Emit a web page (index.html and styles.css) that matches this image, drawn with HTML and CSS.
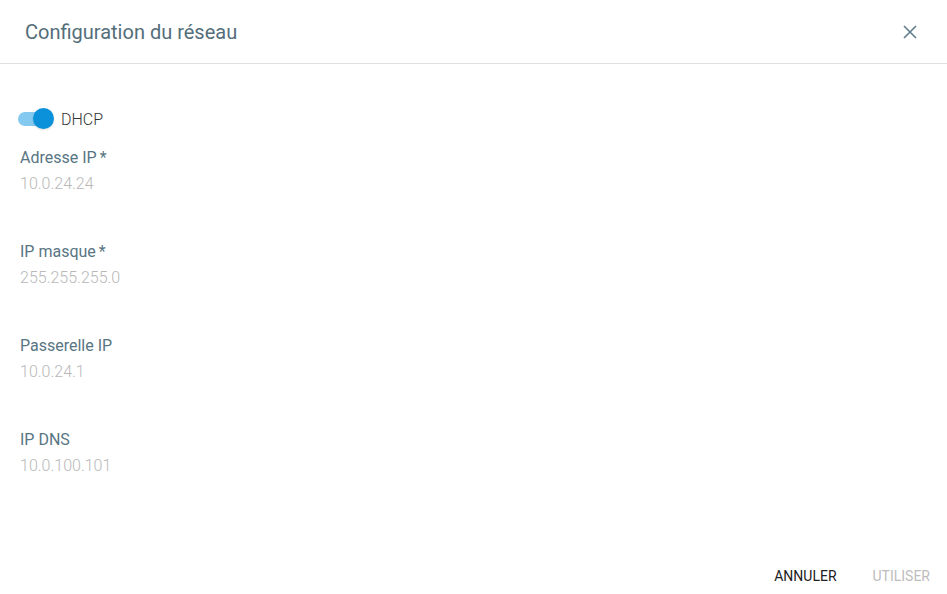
FILE: index.html
```html
<!DOCTYPE html>
<html lang="fr">
<head>
<meta charset="utf-8">
<title>Configuration du réseau</title>
<link rel="stylesheet" href="styles.css">
</head>
<body>
<div class="dialog">
  <header class="dialog-header">
    <h1 class="dialog-title">Configuration du réseau</h1>
    <button class="close-btn" aria-label="Fermer">
      <svg width="14" height="14" viewBox="0 0 14 14"><path d="M1 1L13 13M13 1L1 13" stroke="#607d8b" stroke-width="1.6" fill="none"/></svg>
    </button>
  </header>
  <main class="dialog-body">
    <label class="switch-row">
      <span class="switch"><span class="switch-track"></span><span class="switch-knob"></span></span>
      <span class="switch-label">DHCP</span>
    </label>
    <div class="field">
      <div class="field-label">Adresse IP<span class="req">*</span></div>
      <div class="field-value">10.0.24.24</div>
    </div>
    <div class="field">
      <div class="field-label">IP masque<span class="req">*</span></div>
      <div class="field-value">255.255.255.0</div>
    </div>
    <div class="field">
      <div class="field-label">Passerelle IP</div>
      <div class="field-value">10.0.24.1</div>
    </div>
    <div class="field">
      <div class="field-label">IP DNS</div>
      <div class="field-value">10.0.100.101</div>
    </div>
  </main>
  <footer class="dialog-actions">
    <button class="action-btn">ANNULER</button>
    <button class="action-btn disabled">UTILISER</button>
  </footer>
</div>
</body>
</html>
```
FILE: styles.css
```css
html, body {
  margin: 0;
  padding: 0;
  background: #ffffff;
}
body {
  font-family: Roboto, "Liberation Sans", sans-serif;
  width: 947px;
  height: 594px;
  overflow: hidden;
}
.dialog {
  display: flex;
  flex-direction: column;
  height: 594px;
}
.dialog-header {
  height: 63px;
  border-bottom: 1px solid #e0e0e0;
  display: flex;
  align-items: center;
  justify-content: space-between;
  padding: 0 29px 0 25px;
  box-sizing: content-box;
}
.dialog-title {
  margin: 0;
  font-size: 20px;
  font-weight: 400;
  color: #546e7a;
}
.close-btn {
  background: none;
  border: none;
  padding: 0;
  width: 16px;
  height: 16px;
  display: flex;
  align-items: center;
  justify-content: center;
  cursor: pointer;
}
.dialog-body {
  flex: 1;
  padding: 44px 20px 0 20px;
}
.switch-row {
  display: flex;
  align-items: center;
  height: 22px;
  gap: 6px;
  margin-bottom: 2px;
}
.switch {
  position: relative;
  width: 35px;
  height: 22px;
}
.switch-track {
  position: absolute;
  left: -2px;
  top: 4px;
  width: 34px;
  height: 14px;
  border-radius: 7px;
  background: #83c9f0;
}
.switch-knob {
  position: absolute;
  left: 13px;
  top: 0;
  width: 21px;
  height: 21px;
  border-radius: 50%;
  background: #0a91da;
  box-shadow: 0 1px 2px rgba(0,0,0,0.15);
}
.switch-label {
  font-size: 16px;
  font-weight: 300;
  color: #333333;
}
.field {
  margin-top: 18px;
  height: 76px;
}
.field-label {
  font-size: 16px;
  line-height: 20px;
  color: #587583;
}
.req {
  margin-left: 3px;
}
.field-value {
  margin-top: 6px;
  font-size: 16px;
  line-height: 20px;
  font-weight: 300;
  color: #b8b8b8;
}
.dialog-actions {
  display: flex;
  justify-content: flex-end;
  align-items: center;
  padding: 0;
  height: 36px;
}
.action-btn {
  background: none;
  border: none;
  font-family: Roboto, "Liberation Sans", sans-serif;
  font-size: 14px;
  color: #212121;
  padding: 0 18px;
  height: 36px;
  cursor: pointer;
}
.action-btn.disabled {
  color: #bdbdbd;
  padding-right: 17px;
}
```
